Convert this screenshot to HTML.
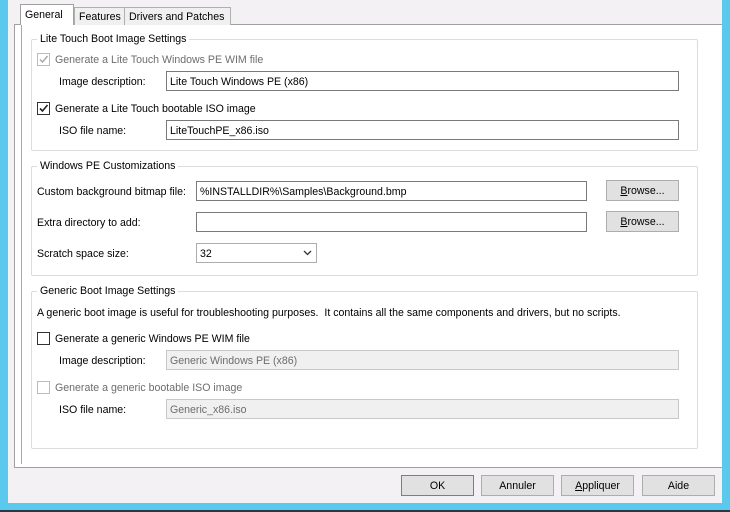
<!DOCTYPE html>
<html><head><style>
*{margin:0;padding:0;box-sizing:border-box}
body{width:730px;height:512px;background:#5bc8ee;position:relative;overflow:hidden;font-family:"Liberation Sans",sans-serif;font-size:10.6px;color:#000}
.a{position:absolute}
.bg{left:8px;top:0;width:714px;height:503px;background:#f4f1f5}
.panel{left:14px;top:24px;width:708px;height:444px;background:#fff;border:1px solid #a0a0a0;border-right:none}
.vl{left:21px;top:24px;width:1px;height:440px;background:#a8a8a8}
.tab{top:7px;height:18px;border:1px solid #b0b0b0;border-bottom:none;background:#f0f0f0;padding:3px 4px 0;white-space:nowrap}
.tab.sel{top:4px;height:21px;background:#fff;border-color:#a0a0a0;padding-top:4px}
.gb{border:1px solid #dcdcdc;border-radius:2px}
.gl{background:#fff;padding:0 3px;white-space:nowrap}
.t{white-space:nowrap}
.in{height:20px;border:1px solid #7a7a7a;background:#fff;padding:4px 3px 0;white-space:nowrap}
.in.dis{border-color:#c8c8c8;background:#f0f0f0;color:#6d6d6d}
.cb{width:13px;height:13px;border:1px solid #333;background:#fff}
.cb.dis{border-color:#bcbcbc}
.btn{height:21px;border:1px solid #adadad;background:#e1e1e1;text-align:center;padding-top:4px}
.g{color:#6d6d6d}
</style></head><body>
<div class="a bg"></div>
<div class="a" style="left:0;top:510px;width:730px;height:2px;background:#2a3a44"></div>
<div class="a panel"></div>
<div class="a vl"></div>
<div class="a tab" style="left:74px;width:51px">Features</div>
<div class="a tab" style="left:124px;width:107px">Drivers and Patches</div>
<div class="a tab sel" style="left:20px;width:54px">General</div>

<div class="a gb" style="left:31px;top:39px;width:667px;height:112px"></div>
<div class="a gl" style="left:37px;top:33px">Lite Touch Boot Image Settings</div>
<div class="a cb dis" style="left:37px;top:53px"><svg width="11" height="11" style="position:absolute;left:0;top:0"><path d="M2 5.5l2.5 2.5 5-6" stroke="#aaa" stroke-width="1.5" fill="none"/></svg></div>
<div class="a t g" style="left:55px;top:54px">Generate a Lite Touch Windows PE WIM file</div>
<div class="a t" style="left:59px;top:76px">Image description:</div>
<div class="a in" style="left:166px;top:71px;width:513px">Lite Touch Windows PE (x86)</div>
<div class="a cb" style="left:37px;top:102px"><svg width="11" height="11" style="position:absolute;left:0;top:0"><path d="M2 5.5l2.5 2.5 5-6" stroke="#222" stroke-width="1.6" fill="none"/></svg></div>
<div class="a t" style="left:55px;top:103px">Generate a Lite Touch bootable ISO image</div>
<div class="a t" style="left:59px;top:125px">ISO file name:</div>
<div class="a in" style="left:166px;top:120px;width:513px">LiteTouchPE_x86.iso</div>

<div class="a gb" style="left:31px;top:166px;width:667px;height:110px"></div>
<div class="a gl" style="left:37px;top:160px">Windows PE Customizations</div>
<div class="a t" style="left:37px;top:186px">Custom background bitmap file:</div>
<div class="a in" style="left:196px;top:181px;width:391px">%INSTALLDIR%\Samples\Background.bmp</div>
<div class="a btn" style="left:606px;top:180px;width:73px"><u>B</u>rowse...</div>
<div class="a t" style="left:37px;top:217px">Extra directory to add:</div>
<div class="a in" style="left:196px;top:212px;width:391px"></div>
<div class="a btn" style="left:606px;top:211px;width:73px"><u>B</u>rowse...</div>
<div class="a t" style="left:37px;top:248px">Scratch space size:</div>
<div class="a in" style="left:196px;top:243px;width:121px;border-color:#adadad">32</div>
<svg class="a" style="left:303px;top:250px" width="9" height="6"><path d="M1 1l3.5 3.5L8 1" stroke="#333" stroke-width="1.3" fill="none"/></svg>

<div class="a gb" style="left:31px;top:291px;width:667px;height:158px"></div>
<div class="a gl" style="left:37px;top:285px">Generic Boot Image Settings</div>
<div class="a t" style="left:37px;top:307px">A generic boot image is useful for troubleshooting purposes.&nbsp; It contains all the same components and drivers, but no scripts.</div>
<div class="a cb" style="left:37px;top:332px"></div>
<div class="a t" style="left:55px;top:333px">Generate a generic Windows PE WIM file</div>
<div class="a t" style="left:59px;top:355px">Image description:</div>
<div class="a in dis" style="left:166px;top:350px;width:513px">Generic Windows PE (x86)</div>
<div class="a cb dis" style="left:37px;top:381px"></div>
<div class="a t g" style="left:55px;top:382px">Generate a generic bootable ISO image</div>
<div class="a t" style="left:59px;top:404px">ISO file name:</div>
<div class="a in dis" style="left:166px;top:399px;width:513px">Generic_x86.iso</div>

<div class="a btn" style="left:401px;top:475px;width:73px;border-color:#3c8fd4">OK</div>
<div class="a btn" style="left:481px;top:475px;width:73px">Annuler</div>
<div class="a btn" style="left:561px;top:475px;width:73px"><u>A</u>ppliquer</div>
<div class="a btn" style="left:642px;top:475px;width:73px">Aide</div>
</body></html>
